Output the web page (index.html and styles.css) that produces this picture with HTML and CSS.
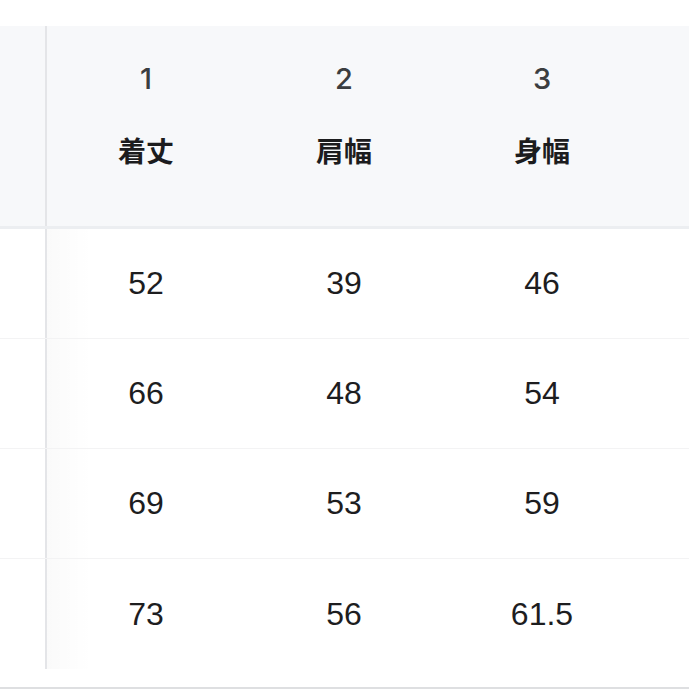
FILE: index.html
```html
<!DOCTYPE html>
<html lang="ja">
<head>
<meta charset="utf-8">
<title>サイズ表</title>
<link rel="stylesheet" href="styles.css">
</head>
<body>
<div class="page">
  <div class="table">
    <div class="row head">
      <div class="cell side"></div>
      <div class="cell hcell first"><span class="num">1</span><span class="label">着丈</span></div>
      <div class="cell hcell"><span class="num">2</span><span class="label">肩幅</span></div>
      <div class="cell hcell"><span class="num">3</span><span class="label">身幅</span></div>
      <div class="cell hcell"></div>
    </div>
    <div class="row body">
      <div class="cell side"></div>
      <div class="cell dcell first">52</div>
      <div class="cell dcell">39</div>
      <div class="cell dcell">46</div>
      <div class="cell dcell"></div>
    </div>
    <div class="row body">
      <div class="cell side"></div>
      <div class="cell dcell first">66</div>
      <div class="cell dcell">48</div>
      <div class="cell dcell">54</div>
      <div class="cell dcell"></div>
    </div>
    <div class="row body">
      <div class="cell side"></div>
      <div class="cell dcell first">69</div>
      <div class="cell dcell">53</div>
      <div class="cell dcell">59</div>
      <div class="cell dcell"></div>
    </div>
    <div class="row body last">
      <div class="cell side"></div>
      <div class="cell dcell first">73</div>
      <div class="cell dcell">56</div>
      <div class="cell dcell">61.5</div>
      <div class="cell dcell"></div>
    </div>
  </div>
  <div class="rule"></div>
</div>
</body>
</html>
```

FILE: styles.css
```css
html, body {
  margin: 0;
  padding: 0;
  background: #ffffff;
  overflow: hidden;
}
.page {
  width: 689px;
  height: 689px;
  padding-top: 26px;
  box-sizing: border-box;
  display: flex;
  flex-direction: column;
}
.table {
  display: flex;
  flex-direction: column;
}
.row {
  display: grid;
  grid-template-columns: 47px 198px 198px 198px 60px;
  box-sizing: border-box;
}
.cell {
  box-sizing: border-box;
}
.side {
  border-right: 2px solid #e4e5e8;
}
.head {
  height: 203px;
  background: #f7f8fa;
  border-bottom: 3px solid #eceef1;
}
.hcell {
  display: flex;
  flex-direction: column;
  align-items: center;
  padding-top: 35px;
  gap: 35px;
}
.num {
  font-family: "Inter", "Liberation Sans", sans-serif;
  font-weight: 500;
  font-size: 29px;
  line-height: 36px;
  color: #3b3d40;
}
.label {
  font-family: "Noto Sans CJK JP", sans-serif;
  font-weight: 700;
  font-size: 28px;
  line-height: 36px;
  color: #1c1c1e;
}
.body {
  height: 110px;
  border-bottom: 1px solid #f3f3f4;
}
.body.last {
  border-bottom: none;
  height: 110px;
}
.dcell {
  display: flex;
  align-items: center;
  justify-content: center;
  font-family: "Liberation Sans", sans-serif;
  font-size: 32px;
  color: #1d1d1f;
}
.dcell.first {
  background: linear-gradient(to right, rgba(0, 0, 0, 0.02), rgba(0, 0, 0, 0) 45px);
}
.rule {
  margin-top: 18px;
  height: 2px;
  background: #dedfe1;
}
```
